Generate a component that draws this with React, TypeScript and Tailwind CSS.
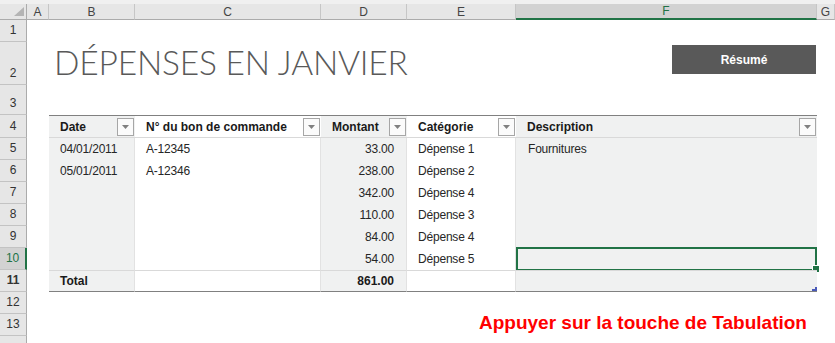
import clsx from "clsx";

// column template: row header, A, B, C, D, E, F, G
const GRID = "grid grid-cols-[27px_22px_86px_186px_86px_109px_301px_18px]";
const SANS = "font-['Liberation_Sans',Arial,sans-serif]";

type Row = {
  n: number;
  date?: string;
  po?: string;
  amount?: string;
  category?: string;
  desc?: string;
};

const rows: Row[] = [
  { n: 5, date: "04/01/2011", po: "A-12345", amount: "33.00", category: "Dépense 1", desc: "Fournitures" },
  { n: 6, date: "05/01/2011", po: "A-12346", amount: "238.00", category: "Dépense 2" },
  { n: 7, amount: "342.00", category: "Dépense 4" },
  { n: 8, amount: "110.00", category: "Dépense 3" },
  { n: 9, amount: "84.00", category: "Dépense 4" },
  { n: 10, amount: "54.00", category: "Dépense 5" },
];

function RowHead({ n, active }: { n?: number; active?: boolean }) {
  return (
    <div
      className={clsx(
        "flex items-end justify-center border-b border-b-[#c3c3c3] text-[12px] leading-[21px]",
        active
          ? "border-r-2 border-r-[#217346] bg-[#d2d2d2] text-[#217346]"
          : "border-r border-r-[#ababab] bg-[#e6e6e6] text-[#333]"
      )}
    >
      {n}
    </div>
  );
}

function FilterButton() {
  return (
    <div className="flex h-[18px] w-[17px] shrink-0 items-center justify-center border border-[#a6a6a6] bg-[#fbfbfb]">
      <svg width="7" height="4" viewBox="0 0 7 4">
        <path d="M0 0h7L3.5 4z" fill="#808080" />
      </svg>
    </div>
  );
}

function HeaderCell({ label, striped }: { label: string; striped?: boolean }) {
  return (
    <div
      className={clsx(
        "flex items-center justify-between border-t border-b border-t-[#808080] border-b-[#d9d9d9] pl-[11px] pr-[1px] text-[12px] font-bold text-[#1a1a1a]",
        striped ? "bg-[#f0f1f1]" : "bg-white"
      )}
    >
      <span>{label}</span>
      <FilterButton />
    </div>
  );
}

function ColHead({ label, active }: { label: string; active?: boolean }) {
  return (
    <div
      className={clsx(
        "flex items-center justify-center border-r border-r-[#c6c6c6]",
        active
          ? "border-b-2 border-b-[#217346] bg-[#d2d2d2] text-[#217346]"
          : "border-b border-b-[#ababab] bg-[#e6e6e6]"
      )}
    >
      {label}
    </div>
  );
}

export default function App() {
  return (
    <div className={`relative h-[343px] w-[835px] overflow-hidden bg-white ${SANS}`}>
      <div className="h-[4px] bg-[#f0f0f0]" />

      {/* column letters */}
      <div className={`${GRID} h-[16px] text-[12px] leading-none text-[#444]`}>
        <div className="relative border-r border-b border-[#ababab] bg-[#e6e6e6]">
          <svg className="absolute right-[2px] bottom-[3px]" width="10" height="9" viewBox="0 0 10 9">
            <path d="M10 0v9H0z" fill="#b4b4b4" />
          </svg>
        </div>
        <ColHead label="A" />
        <ColHead label="B" />
        <ColHead label="C" />
        <ColHead label="D" />
        <ColHead label="E" />
        <ColHead label="F" active />
        <ColHead label="G" />
      </div>

      {/* row 1 */}
      <div className={`${GRID} h-[22px]`}>
        <RowHead n={1} />
      </div>

      {/* row 2: title and summary button */}
      <div className={`${GRID} h-[43px]`}>
        <RowHead n={2} />
        <div />
        <div className="col-span-3 flex items-end overflow-visible whitespace-nowrap pb-[6px] pl-[5px]">
          <h1 className="font-['Lato','Liberation_Sans',sans-serif] text-[33.5px] font-light leading-none tracking-[-0.2px] text-[#595959]">
            DÉPENSES EN JANVIER
          </h1>
        </div>
        <div />
        <div className="flex items-start justify-end pt-[3px] pr-[1px]">
          <button className="flex h-[29px] w-[144px] items-center justify-center bg-[#595959] text-[12px] font-bold text-white">
            Résumé
          </button>
        </div>
      </div>

      {/* row 3 */}
      <div className={`${GRID} h-[30px]`}>
        <RowHead n={3} />
      </div>

      {/* row 4: table header */}
      <div className={`${GRID} h-[23px]`}>
        <RowHead n={4} />
        <div />
        <HeaderCell label="Date" striped />
        <HeaderCell label="N° du bon de commande" />
        <HeaderCell label="Montant" striped />
        <HeaderCell label="Catégorie" />
        <HeaderCell label="Description" striped />
      </div>

      {/* rows 5-10: entries */}
      {rows.map((r) => {
        const active = r.n === 10;
        return (
          <div key={r.n} className={`${GRID} h-[22px] text-[12px] tracking-[-0.2px] text-[#262626]`}>
            <RowHead n={r.n} active={active} />
            <div />
            <div className="flex items-center border-r border-r-[#e2e2e2] bg-[#f0f1f1] pl-[11px]">{r.date}</div>
            <div className="flex items-center border-r border-r-[#e2e2e2] pl-[11px]">{r.po}</div>
            <div className="flex items-center justify-end border-r border-r-[#e2e2e2] bg-[#f0f1f1] pr-[12px]">{r.amount}</div>
            <div className="flex items-center border-r border-r-[#e2e2e2] pl-[11px]">{r.category}</div>
            <div className="relative flex items-center bg-[#f0f1f1] pl-[12px]">
              {r.desc}
              {active && (
                <>
                  <div className="absolute inset-x-0 -top-[1px] -bottom-[1px] border-2 border-[#217346]" />
                  <div className="absolute -right-[3px] -bottom-[3px] h-[8px] w-[8px] border border-white bg-[#217346]" />
                </>
              )}
            </div>
          </div>
        );
      })}

      {/* row 11: totals */}
      <div className={`${GRID} h-[22px] text-[12px] font-bold text-[#1a1a1a]`}>
        <RowHead n={11} />
        <div />
        <div className="flex items-center border-t border-b border-r border-t-[#d9d9d9] border-b-[#808080] border-r-[#e2e2e2] bg-[#f0f1f1] pl-[11px]">
          Total
        </div>
        <div className="border-t border-b border-r border-t-[#d9d9d9] border-b-[#808080] border-r-[#e2e2e2]" />
        <div className="flex items-center justify-end border-t border-b border-r border-t-[#d9d9d9] border-b-[#808080] border-r-[#e2e2e2] bg-[#f0f1f1] pr-[12px]">
          861.00
        </div>
        <div className="border-t border-b border-r border-t-[#d9d9d9] border-b-[#808080] border-r-[#e2e2e2]" />
        <div className="relative border-t border-b border-t-[#d9d9d9] border-b-[#808080] bg-[#f0f1f1]">
          <svg className="absolute right-0 bottom-0" width="5" height="4" viewBox="0 0 5 4">
            <path d="M5 0v4H0v-2h3V0z" fill="#4a5ab8" />
          </svg>
        </div>
      </div>

      {/* rows 12-14 */}
      <div className={`${GRID} h-[22px]`}>
        <RowHead n={12} />
      </div>
      <div className={`${GRID} h-[22px]`}>
        <RowHead n={13} />
      </div>
      <div className={`${GRID} h-[22px]`}>
        <RowHead />
      </div>

      <p className="absolute top-[313px] left-[479px] whitespace-nowrap text-[19px] leading-none font-bold text-[#ff0000]">
        Appuyer sur la touche de Tabulation
      </p>
    </div>
  );
}
